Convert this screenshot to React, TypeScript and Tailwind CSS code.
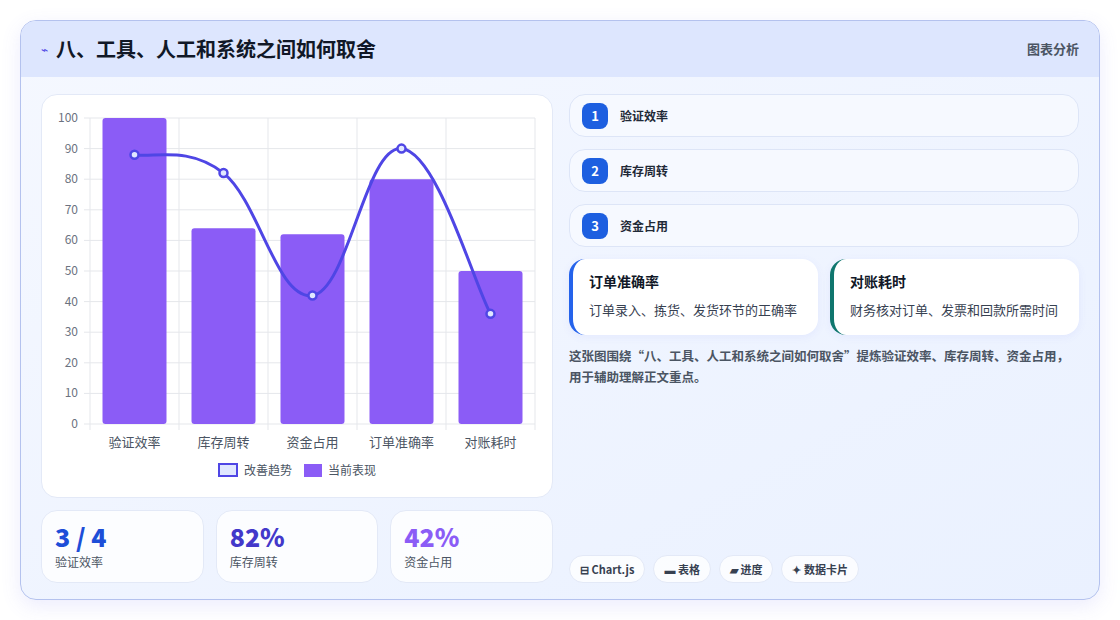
import React from "react"

const cats = ["验证效率", "库存周转", "资金占用", "订单准确率", "对账耗时"]
const bars = [100, 64, 62, 80, 50]
const line = [88, 82, 42, 90, 36]
const X0 = 48, X1 = 493, Y0 = 329, Y1 = 23
const step = (X1 - X0) / 5
const cx = (i: number) => X0 + step * i + step / 2
const cy = (v: number) => Y0 - (v / 100) * (Y0 - Y1)

function curvePath() {
  const pts = line.map((v, i) => [cx(i), cy(v)])
  let d = `M${pts[0][0]},${pts[0][1]}`
  const t = 0.4
  for (let i = 0; i < pts.length - 1; i++) {
    const p0 = pts[i - 1] || pts[i]
    const p1 = pts[i]
    const p2 = pts[i + 1]
    const p3 = pts[i + 2] || p2
    const c1x = p1[0] + ((p2[0] - p0[0]) * t) / 2
    const c1y = p1[1] + ((p2[1] - p0[1]) * t) / 2
    const c2x = p2[0] - ((p3[0] - p1[0]) * t) / 2
    const c2y = p2[1] - ((p3[1] - p1[1]) * t) / 2
    d += ` C${c1x},${c1y} ${c2x},${c2y} ${p2[0]},${p2[1]}`
  }
  return d
}

function Chart() {
  const ticks = [0, 10, 20, 30, 40, 50, 60, 70, 80, 90, 100]
  return (
    <svg width="512" height="362" viewBox="0 0 512 362" className="block">
      {ticks.map((t) => (
        <g key={t}>
          <line x1={X0 - 6} x2={X1} y1={cy(t)} y2={cy(t)} stroke="#e5e7eb" strokeWidth="1" />
          <text x={X0 - 12} y={cy(t) + 4} textAnchor="end" fontSize="12" fill="#6b7280">{t}</text>
        </g>
      ))}
      {[0, 1, 2, 3, 4, 5].map((i) => (
        <line key={i} x1={X0 + step * i} x2={X0 + step * i} y1={Y1} y2={Y0 + 6} stroke="#e5e7eb" strokeWidth="1" />
      ))}
      {bars.map((v, i) => (
        <rect key={i} x={cx(i) - 32} y={cy(v)} width="64" height={Y0 - cy(v)} rx="3" fill="#8b5cf6" />
      ))}
      <path d={curvePath()} fill="none" stroke="#4f46e5" strokeWidth="3" />
      {line.map((v, i) => (
        <circle key={i} cx={cx(i)} cy={cy(v)} r="4" fill="#e0e7ff" stroke="#4f46e5" strokeWidth="2.5" />
      ))}
      {cats.map((c, i) => (
        <text key={c} x={cx(i)} y={352} textAnchor="middle" fontSize="13" fill="#4b5563">{c}</text>
      ))}
    </svg>
  )
}

export default function App() {
  return (
    <div className="w-[1120px] h-[620px] bg-white p-5" style={{ fontFamily: '"Noto Sans CJK SC", "Noto Sans", sans-serif' }}>
      <div className="h-[580px] rounded-2xl border border-[#b4c2ee] overflow-hidden bg-gradient-to-br from-[#f5f8ff] to-[#eaf1ff] shadow-[0_6px_20px_rgba(99,102,241,0.12)] flex flex-col">
        <div className="h-[56px] shrink-0 bg-[#dde6fe] flex items-center justify-between px-5">
          <div className="flex items-center gap-2">
            <span className="text-[#4f46e5] text-xs">⌁</span>
            <h1 className="text-[20px] font-bold text-[#111827]">八、工具、人工和系统之间如何取舍</h1>
          </div>
          <span className="text-[13px] font-semibold text-[#4b5563]">图表分析</span>
        </div>
        <div className="flex gap-4 px-5 pt-[17px] pb-5 flex-1">
          <div className="w-[512px] flex flex-col gap-3">
            <div className="h-[404px] bg-white rounded-2xl border border-[#e3e9f7] pt-0">
              <Chart />
              <div className="flex justify-center items-center gap-3 text-[12px] text-[#4b5563] mt-[4px]">
                <span className="flex items-center gap-1.5"><span className="w-[20px] h-[14px] border-2 border-[#4f46e5] bg-[#e0e7ff]" />改善趋势</span>
                <span className="flex items-center gap-1.5"><span className="w-[18px] h-[13px] bg-[#8b5cf6]" />当前表现</span>
              </div>
            </div>
            <div className="grid grid-cols-3 gap-3">
              {[["3 / 4", "验证效率", "text-[#1d4ed8]"], ["82%", "库存周转", "text-[#4338ca]"], ["42%", "资金占用", "text-[#8b5cf6]"]].map(([v, l, c]) => (
                <div key={l} className="h-[73px] bg-white/80 rounded-2xl border border-[#e3e9f7] px-[13px] pt-2">
                  <div className={`text-[25px] font-extrabold leading-[34px] ${c}`}>{v}</div>
                  <div className="text-[12px] text-[#4b5563]">{l}</div>
                </div>
              ))}
            </div>
          </div>
          <div className="flex-1 flex flex-col">
            {["验证效率", "库存周转", "资金占用"].map((t, i) => (
              <div key={t} className="h-[43px] mb-3 rounded-2xl border border-[#dde5f7] bg-[#f6f9ff] flex items-center gap-3 px-3">
                <span className="w-[26px] h-[26px] rounded-lg bg-[#1d5fe0] text-white text-[13px] font-bold flex items-center justify-center">{i + 1}</span>
                <span className="text-[12px] font-semibold text-[#1f2937]">{t}</span>
              </div>
            ))}
            <div className="grid grid-cols-2 gap-3">
              {[["订单准确率", "订单录入、拣货、发货环节的正确率", "border-[#2563eb]"], ["对账耗时", "财务核对订单、发票和回款所需时间", "border-[#0f766e]"]].map(([t, d, b]) => (
                <div key={t} className={`h-[76px] bg-white rounded-2xl border-l-4 ${b} shadow-[0_2px_8px_rgba(99,102,241,0.08)] px-4 pt-3`}>
                  <div className="text-[14px] font-bold text-[#111827]">{t}</div>
                  <div className="text-[13px] text-[#374151] mt-2">{d}</div>
                </div>
              ))}
            </div>
            <p className="text-[12.5px] leading-[21px] text-[#4b5563] font-semibold mt-[10px] pr-1">这张图围绕“八、工具、人工和系统之间如何取舍”提炼验证效率、库存周转、资金占用，用于辅助理解正文重点。</p>
            <div className="mt-auto flex gap-2">
              {["⊟ Chart.js", "▬ 表格", "▰ 进度", "✦ 数据卡片"].map((c) => (
                <span key={c} className="h-[28px] px-[10px] rounded-full border border-[#e3e9f7] bg-white/80 text-[11px] font-semibold text-[#374151] flex items-center">{c}</span>
              ))}
            </div>
          </div>
        </div>
      </div>
    </div>
  )
}
